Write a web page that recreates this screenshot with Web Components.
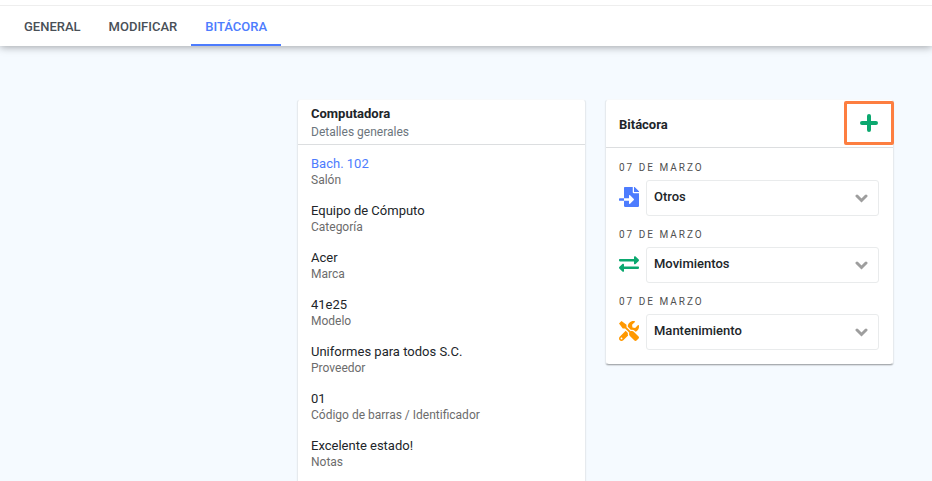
<!DOCTYPE html>
<html lang="es">
<head>
<meta charset="utf-8">
<title>Bitácora</title>
<style>
  body { margin: 0; background: #f5faff; color: #212529; font: 13px/17px Roboto, "Open Sans", sans-serif; }
</style>
</head>
<body>
<app-page>
  <tab-bar slot="tabs">
    <tab-link href="#general">GENERAL</tab-link>
    <tab-link href="#modificar">MODIFICAR</tab-link>
    <tab-link href="#bitacora" active>BITÁCORA</tab-link>
  </tab-bar>
  <info-card>
    <card-title slot="header">Computadora<span slot="sub">Detalles generales</span></card-title>
    <detail-list>
      <detail-item label="Salón" href="#salon">Bach. 102</detail-item>
      <detail-item label="Categoría">Equipo de Cómputo</detail-item>
      <detail-item label="Marca">Acer</detail-item>
      <detail-item label="Modelo">41e25</detail-item>
      <detail-item label="Proveedor">Uniformes para todos S.C.</detail-item>
      <detail-item label="Código de barras / Identificador">01</detail-item>
      <detail-item label="Notas">Excelente estado!</detail-item>
    </detail-list>
  </info-card>
  <info-card>
    <card-title slot="header">Bitácora</card-title>
    <add-button slot="header"></add-button>
    <log-list>
      <log-entry date="07 DE MARZO" icon="import">Otros</log-entry>
      <log-entry date="07 DE MARZO" icon="exchange">Movimientos</log-entry>
      <log-entry date="07 DE MARZO" icon="tools">Mantenimiento</log-entry>
    </log-list>
  </info-card>
</app-page>

<script>
const define = (name, render) => customElements.define(name, class extends HTMLElement {
  connectedCallback() {
    if (!this.shadowRoot) this.attachShadow({ mode: 'open' }).innerHTML = render(this);
  }
});

define('app-page', () => `
  <style>
    :host { display: flex; flex-direction: column; height: 100vh; overflow: hidden; }
    header { flex: none; border-top: 5px solid #fff; }
    main { display: grid; grid-template-columns: repeat(2, minmax(0, 289px)); justify-content: end;
      align-items: start; gap: 19px; padding: 53px 38px 24px; }
  </style>
  <header><slot name="tabs"></slot></header>
  <main><slot></slot></main>`);

define('tab-bar', () => `
  <style>
    :host { display: block; background: #fff; border-top: 1px solid #eee;
      box-shadow: 0 1px 8px rgba(0,0,0,.36); clip-path: inset(0 0 -12px 0); }
    nav { display: flex; padding: 0 10px; }
  </style>
  <nav><slot></slot></nav>`);

define('tab-link', el => `
  <style>
    :host { display: block; }
    a { display: block; padding: 12px 14px 9px; border-bottom: 2px solid transparent;
      color: #495057; font-weight: 500; text-decoration: none; }
    :host([active]) a { color: #4d7cfe; border-bottom-color: #4d7cfe; }
  </style>
  <a href="${el.getAttribute('href')}"><slot></slot></a>`);

define('info-card', () => `
  <style>
    :host { display: block; background: #fff; border: 1px solid #e6eaee; border-top-color: #f7f9fb;
      border-bottom-color: #a9adb1; border-radius: 4px; box-shadow: 0 1px 1px rgba(0,0,0,.12); box-sizing: border-box; }
    header { display: flex; align-items: center; justify-content: space-between;
      border-bottom: 1px solid #dcdee0; }
  </style>
  <header><slot name="header"></slot></header>
  <slot></slot>`);

define('card-title', () => `
  <style>
    :host { display: block; padding: 5px 13px 3px; }
    h2 { margin: 0; font: inherit; font-weight: 700; }
    ::slotted(span) { display: block; margin-top: 2px; font-size: 12px; font-weight: 400; color: #6c757d; }
  </style>
  <h2><slot></slot><slot name="sub"></slot></h2>`);

define('detail-list', () => `
  <style>:host { display: grid; gap: 13px; padding: 10px 13px 24px; }</style>
  <slot></slot>`);

define('detail-item', el => {
  const href = el.getAttribute('href');
  return `
  <style>
    :host { display: block; }
    a { color: #4d7cfe; text-decoration: none; }
    small { display: block; font-size: 12px; color: #6c6c6c; }
  </style>
  ${href ? `<a href="${href}"><slot></slot></a>` : '<slot></slot>'}
  <small>${el.getAttribute('label')}</small>`;
});

define('add-button', () => `
  <style>
    :host { display: block; margin: 1px -1px 2px 0; }
    button { display: grid; place-items: center; width: 50px; height: 44px; padding: 0;
      background: #fff; border: 3px solid #fd7e40; border-radius: 2px; cursor: pointer; }
    svg { display: block; }
  </style>
  <button type="button" aria-label="Agregar">
    <svg width="18" height="18" viewBox="0 0 18 18" fill="none" stroke="#0ba86f" stroke-width="4" stroke-linecap="round"><path d="M9 2v14M2 9h14"/></svg>
  </button>`);

define('log-list', () => `
  <style>:host { display: grid; gap: 12px; padding: 13px 14px 14px 13px; }</style>
  <slot></slot>`);

const icons = {
  import: ['#4d7cfe', '0 0 512 512', '<path d="M16 288c-8.800 0-16 7.200-16 16v32c0 8.800 7.200 16 16 16h112v-64zm489-183L407.100 7c-4.500-4.500-10.600-7-17-7H384v128h128v-6.100c0-6.300-2.500-12.400-7-16.900zM352 136V0H152c-13.300 0-24 10.700-24 24v264h128v-65.200c0-14.300 17.300-21.400 27.400-11.300L379 308c6.600 6.700 6.600 17.400 0 24l-95.700 96.400c-10.100 10.100-27.400 3-27.400-11.300V352H128v136c0 13.300 10.700 24 24 24h336c13.300 0 24-10.700 24-24V160H376c-13.200 0-24-10.800-24-24z"/>'],
  exchange: ['#0ba86f', '0 0 512 512', '<path d="M0 168v-16c0-13.300 10.700-24 24-24h360V80c0-21.400 25.900-32 41-17l80 80c9.300 9.400 9.300 24.600 0 34l-80 80c-15.100 15.100-41 4.400-41-17v-48H24c-13.300 0-24-10.700-24-24zm488 152H128v-48c0-21.300-25.800-32.100-41-17L7 335c-9.300 9.400-9.300 24.600 0 34l80 80c15.100 15.100 41 4.500 41-17v-48h360c13.300 0 24-10.700 24-24v-16c0-13.300-10.700-24-24-24z"/>'],
  tools: ['#ff9800', '0 0 512 512', '<path d="M501.100 395.700L384 278.600c-23.100-23.100-57.600-27.600-85.400-13.900L192 158.100V96L64 0 0 64l96 128h62.100l106.600 106.600c-13.600 27.800-9.200 62.300 13.900 85.400l117.100 117.100c14.600 14.600 38.200 14.600 52.700 0l52.700-52.700c14.500-14.600 14.500-38.200 0-52.700zM331.700 225c28.300 0 54.900 11 74.900 31l19.400 19.400c15.800-6.900 30.800-16.500 43.800-29.500 37.100-37.100 49.700-89.300 37.900-136.700-2.200-9-13.500-12.100-20.100-5.500l-74.400 74.400-67.900-11.300L334 98.900l74.400-74.400c6.600-6.600 3.400-17.900-5.700-20.200-47.400-11.700-99.600.9-136.600 37.900-28.500 28.500-41.900 66.100-41.200 103.600l82.100 82.100c8.100-1.900 16.500-2.900 24.700-2.900zm-103.900 82l-56.700-56.700L18.700 402.800c-25 25-25 65.500 0 90.500s65.500 25 90.500 0l123.600-123.600c-7.600-19.900-9.900-41.600-5-62.700zM64 472c-13.200 0-24-10.800-24-24 0-13.300 10.700-24 24-24s24 10.700 24 24c0 13.200-10.700 24-24 24z"/>']
};

define('log-entry', el => {
  const [color, box, shape] = icons[el.getAttribute('icon')];
  return `
  <style>
    :host { display: block; }
    time { display: block; font-size: 10px; line-height: 14px; letter-spacing: 2px; color: #505050; }
    div { display: grid; grid-template-columns: 20px 1fr; gap: 7px; align-items: center; margin-top: 5px; }
    .icon { display: block; margin-bottom: 3px; }
    button { display: flex; align-items: center; justify-content: space-between; height: 36px;
      padding: 0 10px 0 7px; background: #fff; border: 1px solid #e9ebec; border-radius: 3px;
      font: inherit; font-weight: 500; color: #212529; text-align: left; cursor: pointer; }
    span { padding-bottom: 3px; }
  </style>
  <time>${el.getAttribute('date')}</time>
  <div>
    <svg class="icon" width="20" height="20" viewBox="${box}" fill="${color}">${shape}</svg>
    <button type="button" aria-expanded="false"><span><slot></slot></span>
      <svg width="13" height="9" viewBox="0 0 13 9" fill="none" stroke="#9e9e9e" stroke-width="3" stroke-linecap="round"><path d="M2 2l4.500 4.500L11 2"/></svg>
    </button>
  </div>`;
});
</script>
</body>
</html>
